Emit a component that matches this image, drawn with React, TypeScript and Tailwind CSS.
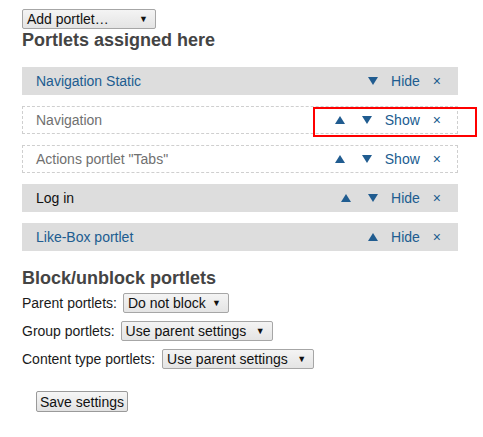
import * as React from "react"

type Portlet = {
  title: string
  visible: boolean
  up: boolean
  down: boolean
  tone: "link" | "hidden" | "plain"
}

const portlets: Portlet[] = [
  { title: "Navigation Static", visible: true, up: false, down: true, tone: "link" },
  { title: "Navigation", visible: false, up: true, down: true, tone: "hidden" },
  { title: 'Actions portlet "Tabs"', visible: false, up: true, down: true, tone: "hidden" },
  { title: "Log in", visible: true, up: true, down: true, tone: "plain" },
  { title: "Like-Box portlet", visible: true, up: true, down: false, tone: "link" },
]

function Triangle({ dir }: { dir: "up" | "down" }) {
  return (
    <svg width="10" height="8" viewBox="0 0 10 8" className="block shrink-0">
      {dir === "up" ? (
        <polygon points="5,0 10,8 0,8" fill="#205c90" />
      ) : (
        <polygon points="0,0 10,0 5,8" fill="#205c90" />
      )}
    </svg>
  )
}

function FakeSelect({ label, width }: { label: string; width: string }) {
  return (
    <div
      className={`${width} h-[20px] flex items-center justify-between border border-[#a6a6a6] rounded-[2px] bg-gradient-to-b from-[#f4f4f4] to-[#e4e4e4] pl-[4px] pr-[7px] text-[14px] text-[#111]`}
    >
      <span className="leading-none">{label}</span>
      <span className="text-[9px] leading-none">▼</span>
    </div>
  )
}

function PortletRow({ p }: { p: Portlet }) {
  const titleColor =
    p.tone === "link" ? "text-[#205c90]" : p.tone === "hidden" ? "text-[#707070]" : "text-[#111]"
  return (
    <div
      className={`h-[28px] flex items-center justify-between ${
        p.visible ? "bg-[#dddddd] pl-[14px] pr-[17px]" : "border border-dashed border-[#cfcfcf] pl-[13px] pr-[16px]"
      }`}
    >
      <span className={`${titleColor}`}>{p.title}</span>
      <div className="flex items-center text-[#205c90]">
        {p.up && <Triangle dir="up" />}
        {p.down && (
          <span className={p.up ? "ml-[17px]" : ""}>
            <Triangle dir="down" />
          </span>
        )}
        <span className="ml-[13px]">{p.visible ? "Hide" : "Show"}</span>
        <span className="ml-[13px]">×</span>
      </div>
    </div>
  )
}

export default function App() {
  return (
    <div
      className="relative w-[483px] h-[437px] bg-white pl-[22px] pr-[25px] pt-[9px] text-[14px] leading-[20px] text-[#1a1a1a]"
      style={{ fontFamily: '"Liberation Sans", Arial, sans-serif' }}
    >
      <FakeSelect label="Add portlet…" width="w-[134px]" />
      <h2 className="text-[18px] leading-[22px] font-bold text-[#444]">Portlets assigned here</h2>

      <div className="mt-[16px] flex flex-col gap-[11px]">
        {portlets.map((p) => (
          <PortletRow key={p.title} p={p} />
        ))}
      </div>

      <h2 className="mt-[16px] text-[18px] leading-[22px] font-bold text-[#444]">Block/unblock portlets</h2>

      <div className="mt-[4px] flex flex-col gap-[8px]">
        <div className="flex items-center gap-[6px]">
          <span>Parent portlets:</span>
          <FakeSelect label="Do not block" width="w-[106px]" />
        </div>
        <div className="flex items-center gap-[6px]">
          <span>Group portlets:</span>
          <FakeSelect label="Use parent settings" width="w-[152px]" />
        </div>
        <div className="flex items-center gap-[7px]">
          <span>Content type portlets:</span>
          <FakeSelect label="Use parent settings" width="w-[152px]" />
        </div>
      </div>

      <button className="mt-[22px] ml-[14px] h-[21px] px-[3px] border border-[#9a9a9a] rounded-[2px] bg-gradient-to-b from-[#f6f6f6] to-[#e2e2e2] text-[14px] leading-none text-[#111]">
        Save settings
      </button>

      <div className="absolute left-[313px] top-[107px] w-[164px] h-[30px] border-2 border-[#ff0000]" />
    </div>
  )
}
